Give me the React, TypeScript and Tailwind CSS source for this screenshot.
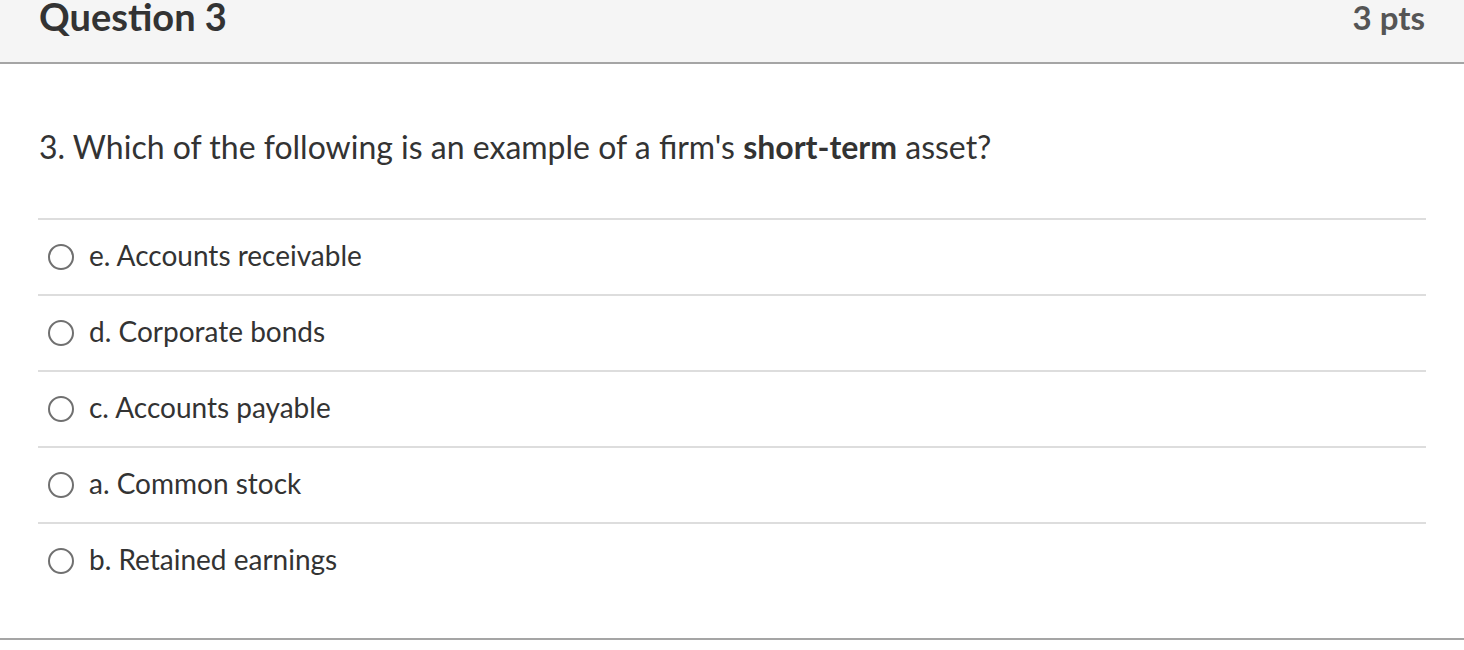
import React from "react";

const answers = [
  "e. Accounts receivable",
  "d. Corporate bonds",
  "c. Accounts payable",
  "a. Common stock",
  "b. Retained earnings",
];

export default function App() {
  return (
    <div className="w-[1464px] h-[650px] bg-white overflow-hidden" style={{ fontFamily: "Lato, 'Open Sans', sans-serif" }}>
      <div className="h-[64px] bg-[#f5f5f5] border-b-2 border-[#a5a5a5] flex justify-between items-start pl-[39px] pr-[39px]">
        <div className="text-[38px] font-bold leading-none text-[#333] mt-[-3px]">Question 3</div>
        <div className="text-[33px] font-bold leading-none text-[#555] mt-[1px]">3 pts</div>
      </div>
      <div className="border-b-2 border-[#a5a5a5]">
        <div className="pl-[39px] pt-[64px] pb-[52px] text-[32px] leading-[38px] text-[#333]">
          3. Which of the following is an example of a firm's <strong className="font-bold">short-term</strong> asset?
        </div>
        <div className="mx-[38px] pb-[40px]">
          {answers.map((a) => (
            <div key={a} className="border-t-2 border-[#ddd] h-[76px] flex items-center">
              <span className="ml-[10px] w-[26px] h-[26px] rounded-full border-2 border-[#707070] shrink-0" />
              <span className="ml-[15px] mb-[4px] text-[28px] text-[#333] leading-none">{a}</span>
            </div>
          ))}
        </div>
      </div>
    </div>
  );
}
